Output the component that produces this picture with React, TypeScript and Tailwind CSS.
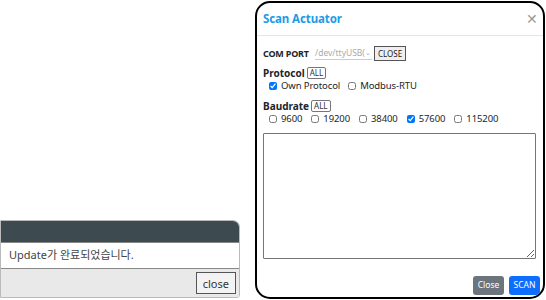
import { useState } from "react";

const font = { fontFamily: '"Noto Sans", "Noto Sans CJK KR", sans-serif' };

const Check = ({ label, checked }: { label: string; checked?: boolean }) => {
  const [on, setOn] = useState(!!checked);
  return (
    <label className="flex items-center gap-[4px] text-[9.5px] leading-[12px] tracking-[-0.1px] text-[#212529]">
      <input
        type="checkbox"
        checked={on}
        onChange={() => setOn(!on)}
        className="w-[8px] h-[8px] m-0 accent-[#0075ff]"
      />
      {label}
    </label>
  );
};

const SmallBtn = ({ text }: { text: string }) => (
  <button className="border border-[#767676] rounded-[2px] bg-white px-[2px] h-[12px] leading-[10px] text-[8px] text-[#333]">
    {text}
  </button>
);

const Toast = () => (
  <div className="w-[240px] mt-[220px] h-[78px] border border-[#bbb] rounded-tr-[7px] rounded-br-[3px] overflow-hidden flex flex-col">
    <div className="h-[21px] bg-[#3d4b51]" />
    <div className="h-[27px] bg-white border-y border-[#888] flex items-center pl-[8px] text-[11px] text-[#444]">
      Update가 완료되었습니다.
    </div>
    <div className="flex-1 bg-[#e9e9e9] flex items-center justify-end pr-[3px]">
      <button className="h-[22px] px-[6px] border border-[#555] bg-[#f3f3f3] text-[11px] text-[#333] leading-none">
        close
      </button>
    </div>
  </div>
);

const ScanModal = () => (
  <div className="ml-[15px] mt-[1px] w-[290px] h-[298px] border-2 border-black rounded-[15px] bg-white overflow-hidden flex flex-col">
    <div className="h-[33px] flex items-center justify-between pl-[6px] pr-[5px] border-b border-[#e5e5e5] shrink-0">
      <span className="text-[11.5px] font-bold text-[#1b9be8] tracking-[-0.1px]">Scan Actuator</span>
      <span className="text-[#9a9a9a] text-[14px] leading-none">✕</span>
    </div>
    <div className="flex-1 flex flex-col px-[6px] pt-[10px]">
      <div className="flex items-center h-[15px]">
        <span className="text-[9px] font-bold text-[#212529] w-[52px] tracking-[-0.2px]">COM PORT</span>
        <div className="w-[57px] h-[12px] border-b border-[#ccc] flex items-center justify-between text-[8.5px] text-[#aaa] pr-[1px]">
          <span>/dev/ttyUSB(</span>
          <span className="text-[7px]">⌄</span>
        </div>
        <button className="ml-[2px] h-[15px] px-[3px] border border-[#555] bg-[#efefef] text-[8px] text-[#222] leading-none">
          CLOSE
        </button>
      </div>
      <div className="mt-[5px] flex items-center gap-[2px] h-[14px]">
        <span className="text-[10px] font-bold text-[#212529]">Protocol</span>
        <SmallBtn text="ALL" />
      </div>
      <div className="flex items-center gap-[8px] pl-[6px]">
        <Check label="Own Protocol" checked />
        <Check label="Modbus-RTU" />
      </div>
      <div className="mt-[7px] flex items-center gap-[2px] h-[14px]">
        <span className="text-[10px] font-bold text-[#212529]">Baudrate</span>
        <SmallBtn text="ALL" />
      </div>
      <div className="flex items-center gap-[9px] pl-[6px]">
        <Check label="9600" />
        <Check label="19200" />
        <Check label="38400" />
        <Check label="57600" checked />
        <Check label="115200" />
      </div>
      <textarea className="mt-[8px] w-[273px] h-[126px] border border-[#767676] rounded-[1px] resize" />
      <div className="flex justify-end gap-[5px] mt-auto mb-[2px] mr-[-3px]">
        <button className="h-[19px] w-[31px] rounded-[3px] bg-[#6c757d] text-white text-[8.5px]">Close</button>
        <button className="h-[19px] w-[31px] rounded-[3px] bg-[#0d6efd] text-white text-[8.5px]">SCAN</button>
      </div>
    </div>
  </div>
);

export default function App() {
  return (
    <div className="w-[546px] h-[300px] bg-white flex items-start" style={font}>
      <Toast />
      <ScanModal />
    </div>
  );
}
